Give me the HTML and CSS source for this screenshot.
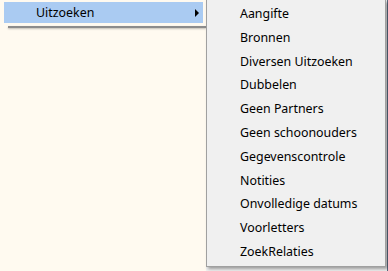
FILE: index.html
```html
<!DOCTYPE html>
<html lang="nl">
<head>
  <meta charset="UTF-8" />
  <title>Uitzoeken</title>
  <link rel="stylesheet" href="styles.css">
</head>
<body>
  <div class="screen">
    <!-- hoofdmenu -->
    <div class="main-menu">
      <div class="menu-item active">
        <span class="label">Uitzoeken</span>
        <span class="arrow"></span>
      </div>
      <div class="menu-sep"></div>
    </div>

    <!-- submenu -->
    <ul class="submenu">
      <li>Aangifte</li>
      <li>Bronnen</li>
      <li>Diversen Uitzoeken</li>
      <li>Dubbelen</li>
      <li>Geen Partners</li>
      <li>Geen schoonouders</li>
      <li>Gegevenscontrole</li>
      <li>Notities</li>
      <li>Onvolledige datums</li>
      <li>Voorletters</li>
      <li>ZoekRelaties</li>
    </ul>

    <div class="edge"></div>
  </div>
</body>
</html>
```

FILE: styles.css
```css
html, body {
  margin: 0;
  padding: 0;
  height: 100%;
  background-color: #f0f0f0;
  font-family: "Noto Sans", "Open Sans", sans-serif;
  font-size: 12.4px;
  color: #000;
  overflow: hidden;
}

.screen {
  display: flex;
  height: 100%;
}

.main-menu {
  width: 206px;
  flex: none;
  background-color: #fffaf0;
  padding: 2px 0 0 4px;
  box-sizing: border-box;
}

.menu-item {
  display: flex;
  align-items: center;
  justify-content: space-between;
  width: 199px;
  height: 21px;
  background-color: #aacbf2;
  box-sizing: border-box;
  padding: 0 4px 0 32px;
}

.menu-item .label {
  line-height: 21px;
}

.arrow {
  width: 0;
  height: 0;
  border-top: 4px solid transparent;
  border-bottom: 4px solid transparent;
  border-left: 4px solid #000;
}

.menu-sep {
  margin: 3px 0 0 4px;
  height: 2px;
  width: 198px;
  background-color: #8c8c8c;
  box-shadow: 0 1px 2px rgba(0, 0, 0, 0.25);
}

.submenu {
  list-style: none;
  margin: 0;
  padding: 2px 0 2px 0;
  width: 180px;
  height: 267px;
  box-sizing: border-box;
  flex: none;
  background-color: #f0f0f0;
  border: 1px solid #a0a0a0;
  border-top: none;
  box-shadow: 2px 2px 3px rgba(0, 0, 0, 0.35);
  position: relative;
  z-index: 1;
}

.submenu li {
  height: 23.8px;
  line-height: 23.8px;
  padding-left: 33px;
  white-space: nowrap;
}

.edge {
  flex: 1;
  border-right: 1px solid #5a6a80;
}
```
